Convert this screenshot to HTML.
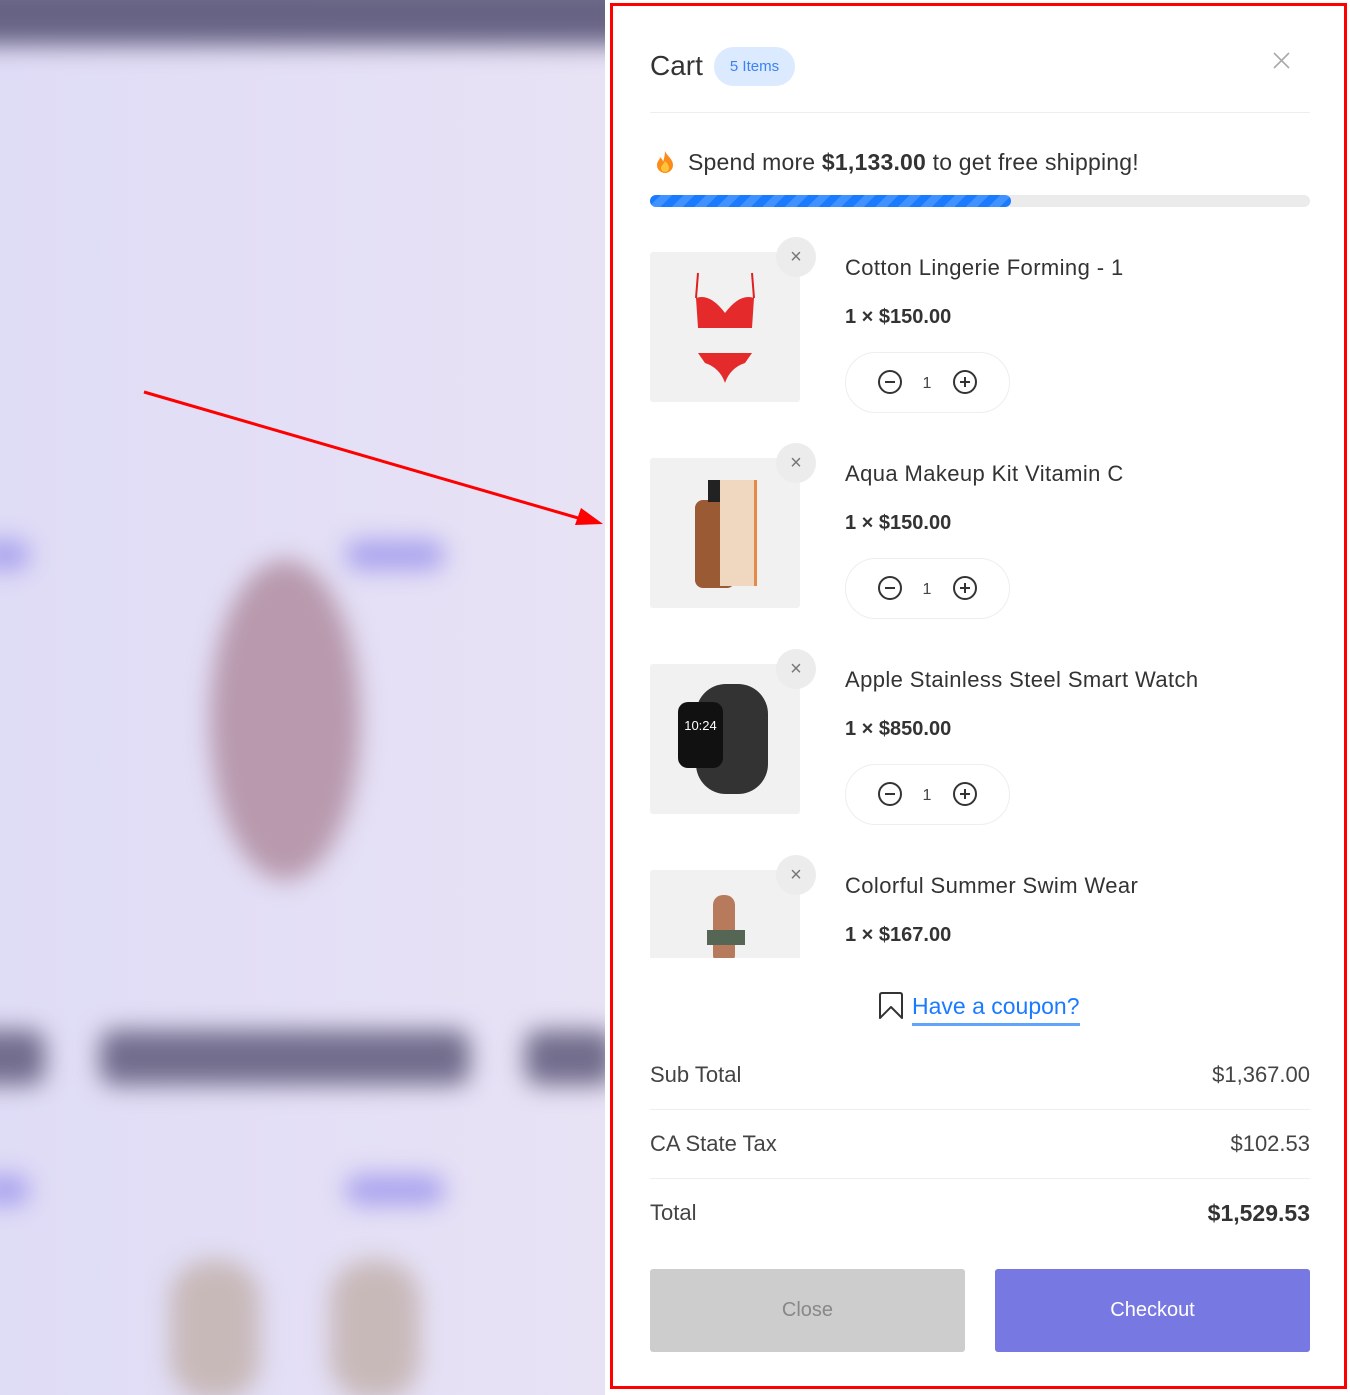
<!DOCTYPE html>
<html><head><meta charset="utf-8"><style>
*{margin:0;padding:0;box-sizing:border-box}
body{width:1350px;height:1395px;position:relative;overflow:hidden;font-family:"Liberation Sans",sans-serif;color:#333;background:#fff}
.bg{position:absolute;left:0;top:0;width:605px;height:1395px;background:linear-gradient(90deg,#dfdcf6,#e8e2f5);overflow:hidden}
.blur{position:absolute;filter:blur(12px)}
.a{position:absolute}
.panel{position:absolute;left:605px;top:0;width:745px;height:1395px;background:#fff}
.border{position:absolute;left:610px;top:3px;width:737px;height:1386px;border:3px solid #f00}
.item .img{position:absolute;left:650px;width:150px;height:150px;background:#f1f1f1;border-radius:3px}
.rm{position:absolute;left:776px;width:40px;height:40px;border-radius:50%;background:#ececec;color:#777;font-size:20px;text-align:center;line-height:40px}
.t{position:absolute;left:845px;font-size:22px;color:#333;letter-spacing:0.4px}
.p{position:absolute;left:845px;font-size:20px;font-weight:bold;color:#333}
.q{position:absolute;left:845px;width:165px;height:61px;border:1px solid #eee;border-radius:31px}
.row{position:absolute;left:650px;width:660px;font-size:22px;color:#444;display:flex;justify-content:space-between}
.hr{position:absolute;left:650px;width:660px;height:1px;background:#eee}
</style></head><body>
<div class="bg">
 <div class="blur" style="left:-30px;top:-20px;width:665px;height:65px;background:#676384"></div>
 <div class="blur" style="left:210px;top:560px;width:150px;height:320px;border-radius:50%;background:#b899ad"></div>
 <div class="blur" style="left:345px;top:540px;width:100px;height:30px;border-radius:15px;background:#a9a2ee"></div>
 <div class="blur" style="left:-20px;top:540px;width:50px;height:30px;border-radius:15px;background:#a9a2ee"></div>
 <div class="blur" style="left:345px;top:1175px;width:100px;height:30px;border-radius:15px;background:#a9a2ee"></div>
 <div class="blur" style="left:-20px;top:1175px;width:50px;height:30px;border-radius:15px;background:#a9a2ee"></div>
 <div class="blur" style="left:100px;top:1030px;width:370px;height:55px;border-radius:15px;background:#726d8c"></div>
 <div class="blur" style="left:-40px;top:1030px;width:85px;height:55px;border-radius:15px;background:#726d8c"></div>
 <div class="blur" style="left:525px;top:1030px;width:90px;height:55px;border-radius:15px;background:#726d8c"></div>
 <div class="blur" style="left:170px;top:1260px;width:90px;height:140px;border-radius:40px;background:#c8b9b9"></div>
 <div class="blur" style="left:330px;top:1260px;width:90px;height:140px;border-radius:40px;background:#c8b9b9"></div>
 <svg class="a" style="left:0;top:0" width="605" height="1395"><line x1="144" y1="392" x2="585" y2="520" stroke="#f00" stroke-width="3"/><polygon points="603,524 575,525 581,508" fill="#f00"/></svg>
</div>
<div class="panel"></div>
<div class="a" style="left:650px;top:50px;font-size:28px;color:#333">Cart</div>
<div class="a" style="left:714px;top:47px;width:81px;height:39px;border-radius:20px;background:#dbeafe;color:#3b82f6;font-size:15px;text-align:center;line-height:39px">5 Items</div>
<svg class="a" style="left:1273px;top:52px" width="17" height="17"><path d="M1 1L16 16M16 1L1 16" stroke="#aaa" stroke-width="1.6"/></svg>
<div class="hr" style="top:112px"></div>
<svg class="a" style="left:655px;top:150px" width="20" height="24"><path d="M10 1C12 6 18 9 18 15a8 8 0 0 1-16 0c0-4 3-5 3-8 2 2 3 3 3 5 1-3 2-7 2-11z" fill="#fb8c1a"/><path d="M10 11c2 2 4 4 4 7a4 4 0 0 1-8 0c0-2 2-3 4-7z" fill="#fdc33a"/></svg>
<div class="a" style="left:688px;top:149px;font-size:23px;color:#333;letter-spacing:0.2px">Spend more <b>$1,133.00</b> to get free shipping!</div>
<div class="a" style="left:650px;top:195px;width:660px;height:12px;border-radius:6px;background:#ebebeb"></div>
<div class="a" style="left:650px;top:195px;width:361px;height:12px;border-radius:6px;background:repeating-linear-gradient(-45deg,#1a7bff 0 8px,#3f92ff 8px 16px)"></div>

<div class="a" style="left:600px;top:230px;width:740px;height:728px;overflow:hidden">
 <div style="position:absolute;left:-600px;top:-230px;width:1350px;height:1000px">
  <div class="item"><div class="img" style="top:252px"></div>
   <svg class="a" style="left:690px;top:268px" width="70" height="120"><path d="M8 5L6 30M62 5L64 30" stroke="#e02020" stroke-width="2"/><path d="M6 30Q20 25 35 45Q50 25 64 30L62 60L8 60Z" fill="#e42a2a"/><path d="M8 85L62 85L55 95Q40 100 35 115Q30 100 15 95Z" fill="#e42a2a"/></svg>
   <div class="rm" style="top:237px">×</div>
   <div class="t" style="top:255px">Cotton Lingerie Forming - 1</div>
   <div class="p" style="top:306px">1 × $150.00</div>
   <div class="q" style="top:352px"></div>
  </div>
  <div class="item"><div class="img" style="top:458px"></div>
   <div class="a" style="left:695px;top:500px;width:40px;height:88px;border-radius:8px;background:#9a5a34"></div>
   <div class="a" style="left:708px;top:480px;width:12px;height:22px;background:#222"></div>
   <div class="a" style="left:720px;top:480px;width:37px;height:106px;background:#f0d8c0;border-right:3px solid #e38a4a"></div>
   <div class="rm" style="top:443px">×</div>
   <div class="t" style="top:461px">Aqua Makeup Kit Vitamin C</div>
   <div class="p" style="top:512px">1 × $150.00</div>
   <div class="q" style="top:558px"></div>
  </div>
  <div class="item"><div class="img" style="top:664px"></div>
   <div class="a" style="left:696px;top:684px;width:72px;height:110px;border-radius:30px;background:#333"></div>
   <div class="a" style="left:678px;top:702px;width:45px;height:66px;border-radius:10px;background:#111;color:#fff;font-size:13px;text-align:center;padding-top:16px">10:24</div>
   <div class="rm" style="top:649px">×</div>
   <div class="t" style="top:667px">Apple Stainless Steel Smart Watch</div>
   <div class="p" style="top:718px">1 × $850.00</div>
   <div class="q" style="top:764px"></div>
  </div>
  <div class="item"><div class="img" style="top:870px"></div>
   <div class="a" style="left:713px;top:895px;width:22px;height:70px;border-radius:10px;background:#b77a5c"></div>
   <div class="a" style="left:707px;top:930px;width:38px;height:15px;background:#556654"></div>
   <div class="rm" style="top:855px">×</div>
   <div class="t" style="top:873px">Colorful Summer Swim Wear</div>
   <div class="p" style="top:924px">1 × $167.00</div>
  </div>
 </div>
</div>
<svg class="a" style="left:877px;top:369px" width="100" height="28"><circle cx="13" cy="13" r="11" fill="none" stroke="#333" stroke-width="2"/><path d="M8 13H18" stroke="#333" stroke-width="2"/><circle cx="88" cy="13" r="11" fill="none" stroke="#333" stroke-width="2"/><path d="M83 13H93M88 8V18" stroke="#333" stroke-width="2"/><text x="50" y="19" font-size="16" text-anchor="middle" fill="#444" font-family="Liberation Sans">1</text></svg>
<svg class="a" style="left:877px;top:575px" width="100" height="28"><circle cx="13" cy="13" r="11" fill="none" stroke="#333" stroke-width="2"/><path d="M8 13H18" stroke="#333" stroke-width="2"/><circle cx="88" cy="13" r="11" fill="none" stroke="#333" stroke-width="2"/><path d="M83 13H93M88 8V18" stroke="#333" stroke-width="2"/><text x="50" y="19" font-size="16" text-anchor="middle" fill="#444" font-family="Liberation Sans">1</text></svg>
<svg class="a" style="left:877px;top:781px" width="100" height="28"><circle cx="13" cy="13" r="11" fill="none" stroke="#333" stroke-width="2"/><path d="M8 13H18" stroke="#333" stroke-width="2"/><circle cx="88" cy="13" r="11" fill="none" stroke="#333" stroke-width="2"/><path d="M83 13H93M88 8V18" stroke="#333" stroke-width="2"/><text x="50" y="19" font-size="16" text-anchor="middle" fill="#444" font-family="Liberation Sans">1</text></svg>

<svg class="a" style="left:878px;top:992px" width="26" height="28"><path d="M2 3Q2 1 4 1H22Q24 1 24 3V26L13 15L2 26Z" fill="none" stroke="#333" stroke-width="2" stroke-linejoin="round"/></svg>
<div class="a" style="left:912px;top:993px;font-size:23px;color:#1a7bff;border-bottom:3px solid #60a5fa;padding-bottom:3px">Have a coupon?</div>
<div class="row" style="top:1062px"><span>Sub Total</span><span>$1,367.00</span></div>
<div class="hr" style="top:1109px"></div>
<div class="row" style="top:1131px"><span>CA State Tax</span><span>$102.53</span></div>
<div class="hr" style="top:1178px"></div>
<div class="row" style="top:1200px"><span>Total</span><b style="color:#333;font-size:23px">$1,529.53</b></div>
<div class="a" style="left:650px;top:1269px;width:315px;height:83px;background:#cdcdcd;border-radius:3px;color:#888;font-size:20px;text-align:center;line-height:83px">Close</div>
<div class="a" style="left:995px;top:1269px;width:315px;height:83px;background:#7878e3;border-radius:3px;color:#fff;font-size:20px;text-align:center;line-height:83px">Checkout</div>
<div class="border"></div>
</body></html>
